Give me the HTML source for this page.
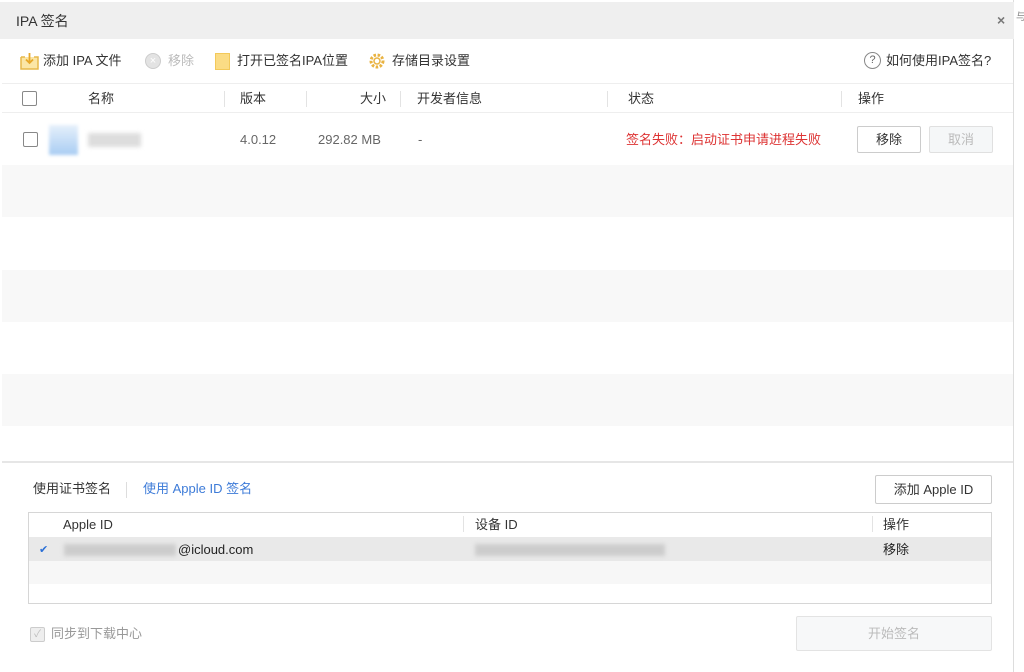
<!DOCTYPE html>
<html><head><meta charset="utf-8"><style>
*{box-sizing:border-box;margin:0;padding:0}
body{width:1024px;height:672px;overflow:hidden;background:#fff;font-family:"Liberation Sans","Noto Sans CJK SC",sans-serif;font-size:13px;color:#333;position:relative}
.a{position:absolute}
.win{left:0;top:0;width:1014px;height:672px;border-right:1px solid #ddd;background:#fff}
.title{left:0;top:2px;width:1014px;height:37px;background:#efefef}
.t{white-space:nowrap;line-height:16px}
.stripe{left:2px;width:1011px;height:52px;background:#f8f8f8}
.cb{width:15px;height:15px;border:1px solid #888;border-radius:2px;background:#fff}
.btn{border:1px solid #ccc;border-radius:2px;background:#fff;text-align:center}
.sep{width:1px;height:16px;background:#e3e3e3}
</style></head><body>
<div class="a win"></div>
<div class="a title"></div>
<div class="a t" style="left:16px;top:13px;font-size:14px;color:#333">IPA 签名</div>
<div class="a t" style="left:997px;top:12px;font-size:14px;color:#777;font-weight:bold">×</div>
<div class="a t" style="left:1016px;top:10px;font-size:10px;color:#888">与</div>

<svg class="a" style="left:20px;top:52px" width="19" height="18" viewBox="0 0 19 18"><path d="M1 5h4M14 5h4v12H1V5" fill="#fbe6a6" stroke="#e7b84a" stroke-width="1.5"/><path d="M9.5 1v10M6 7.5l3.5 3.5 3.5-3.5" fill="none" stroke="#e7a82a" stroke-width="1.8"/></svg>
<div class="a t" style="left:43px;top:53px">添加 IPA 文件</div>
<div class="a" style="left:145px;top:53px;width:16px;height:16px;border-radius:50%;background:#e3e3e3;border:1px solid #ccc;color:#fff;font-size:11px;text-align:center;line-height:14px">×</div>
<div class="a t" style="left:168px;top:53px;color:#bbb">移除</div>
<div class="a" style="left:215px;top:53px;width:15px;height:17px;background:#fbdc85;border:1px solid #f3c95a"></div>
<div class="a t" style="left:237px;top:53px">打开已签名IPA位置</div>
<svg class="a" style="left:368px;top:52px" width="18" height="18" viewBox="0 0 18 18"><circle cx="9" cy="9" r="6" fill="none" stroke="#e9b342" stroke-width="3" stroke-dasharray="2.5 1.6"/><circle cx="9" cy="9" r="3" fill="none" stroke="#e9b342" stroke-width="1.5"/></svg>
<div class="a t" style="left:392px;top:53px">存储目录设置</div>
<div class="a" style="left:864px;top:52px;width:17px;height:17px;border:1px solid #888;border-radius:50%;font-size:11px;text-align:center;line-height:15px;color:#666">?</div>
<div class="a t" style="left:886px;top:53px">如何使用IPA签名?</div>

<div class="a" style="left:2px;top:83px;width:1011px;height:1px;background:#eee"></div>
<div class="a cb" style="left:22px;top:91px"></div>
<div class="a t" style="left:88px;top:91px">名称</div>
<div class="a sep" style="left:224px;top:91px"></div>
<div class="a t" style="left:240px;top:91px">版本</div>
<div class="a sep" style="left:306px;top:91px"></div>
<div class="a t" style="left:360px;top:91px">大小</div>
<div class="a sep" style="left:400px;top:91px"></div>
<div class="a t" style="left:417px;top:91px">开发者信息</div>
<div class="a sep" style="left:607px;top:91px"></div>
<div class="a t" style="left:628px;top:91px">状态</div>
<div class="a sep" style="left:841px;top:91px"></div>
<div class="a t" style="left:858px;top:91px">操作</div>
<div class="a" style="left:2px;top:112px;width:1011px;height:1px;background:#eee"></div>

<div class="a cb" style="left:23px;top:132px"></div>
<div class="a" style="left:49px;top:125px;width:29px;height:30px;background:linear-gradient(#e6f0fb,#a9cdf3);filter:blur(1.5px)"></div>
<div class="a" style="left:88px;top:133px;width:53px;height:14px;background:#ddd;filter:blur(2px)"></div>
<div class="a t" style="left:240px;top:132px;color:#666">4.0.12</div>
<div class="a t" style="left:318px;top:132px;color:#666">292.82 MB</div>
<div class="a t" style="left:418px;top:132px;color:#666">-</div>
<div class="a t" style="left:626px;top:132px;color:#d33">签名失败：启动证书申请进程失败</div>
<div class="a btn t" style="left:857px;top:126px;width:64px;height:27px;line-height:25px">移除</div>
<div class="a btn t" style="left:929px;top:126px;width:64px;height:27px;line-height:25px;color:#bbb;background:#f5f7f8;border-color:#e0e0e0">取消</div>

<div class="a stripe" style="top:165px"></div>
<div class="a stripe" style="top:270px"></div>
<div class="a stripe" style="top:374px"></div>
<div class="a" style="left:2px;top:461px;width:1011px;height:2px;background:#e6e6e6"></div>

<div class="a t" style="left:33px;top:481px;color:#333">使用证书签名</div>
<div class="a sep" style="left:126px;top:482px;background:#ddd"></div>
<div class="a t" style="left:143px;top:481px;color:#3d7bd8">使用 Apple ID 签名</div>
<div class="a btn t" style="left:875px;top:475px;width:117px;height:29px;line-height:27px">添加 Apple ID</div>

<div class="a" style="left:28px;top:512px;width:964px;height:92px;border:1px solid #d6d6d6"></div>
<div class="a t" style="left:63px;top:517px">Apple ID</div>
<div class="a" style="left:463px;top:516px;width:1px;height:16px;background:#e3e3e3"></div>
<div class="a t" style="left:475px;top:517px">设备 ID</div>
<div class="a" style="left:872px;top:516px;width:1px;height:16px;background:#e3e3e3"></div>
<div class="a t" style="left:883px;top:517px">操作</div>
<div class="a" style="left:29px;top:537px;width:962px;height:24px;background:#e9e9e9"></div>
<div class="a" style="left:29px;top:561px;width:962px;height:23px;background:#f7f7f7"></div>
<div class="a t" style="left:39px;top:542px;color:#2a6fd6;font-size:11px">✔</div>
<div class="a" style="left:64px;top:544px;width:112px;height:12px;background:#ccc;filter:blur(2px)"></div>
<div class="a t" style="left:178px;top:542px;color:#222">@icloud.com</div>
<div class="a" style="left:475px;top:544px;width:190px;height:12px;background:#ccc;filter:blur(2px)"></div>
<div class="a t" style="left:883px;top:542px;color:#222">移除</div>

<div class="a cb" style="left:30px;top:627px;border-color:#ccc;background:#eee;font-size:10px;color:#bbb;line-height:13px;text-align:center">✓</div>
<div class="a t" style="left:51px;top:626px;color:#999">同步到下载中心</div>
<div class="a btn t" style="left:796px;top:616px;width:196px;height:35px;line-height:33px;color:#bbb;background:#f7f8f9;border-color:#e3e3e3">开始签名</div>
</body></html>
